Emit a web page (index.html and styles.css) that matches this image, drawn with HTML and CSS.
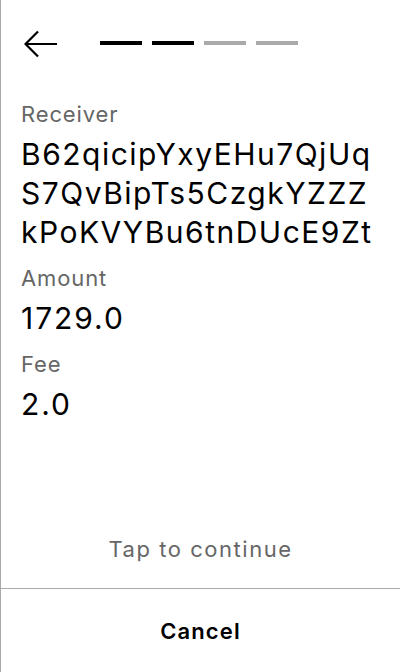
FILE: index.html
```html
<!DOCTYPE html>
<html>
<head>
<meta charset="utf-8">
<link rel="stylesheet" href="styles.css">
</head>
<body>
<div class="screen">
  <header class="header">
    <svg class="back" width="34" height="28" viewBox="0 0 34 28">
      <path d="M33 14H2M14 1.5L1.5 14L14 26.5" fill="none" stroke="#000" stroke-width="2.2"/>
    </svg>
    <div class="steps">
      <span class="step on"></span>
      <span class="step on"></span>
      <span class="step"></span>
      <span class="step"></span>
    </div>
  </header>
  <main class="content">
    <div class="label">Receiver</div>
    <div class="value address">B62qicipYxyEHu7QjUqS7QvBipTs5CzgkYZZZkPoKVYBu6tnDUcE9Zt</div>
    <div class="label">Amount</div>
    <div class="value">1729.0</div>
    <div class="label">Fee</div>
    <div class="value">2.0</div>
  </main>
  <div class="tap">Tap to continue</div>
  <button class="cancel">Cancel</button>
</div>
</body>
</html>
```
FILE: styles.css
```css
* { box-sizing: border-box; }
html, body { margin: 0; padding: 0; background: #fff; }
body { font-family: Inter, "Noto Sans", sans-serif; color: #000; }
.screen {
  width: 400px;
  height: 672px;
  border-left: 1px solid #aaa;
  display: flex;
  flex-direction: column;
}
.header {
  display: flex;
  align-items: center;
  padding: 29px 0 0 23px;
  height: 58px;
}
.back { display: block; }
.steps {
  display: flex;
  gap: 10px;
  margin-left: 42px;
  margin-top: -2px;
}
.step {
  width: 42px;
  height: 4px;
  background: #aaa;
}
.step.on { background: #000; }
.content {
  padding: 43px 16px 0 20px;
  flex: 1;
}
.label {
  font-size: 22px;
  line-height: 26px;
  color: #666;
  letter-spacing: 0.04em;
  margin-top: 13px;
}
.label:first-child { margin-top: 0; }
.value {
  font-size: 30px;
  line-height: 39px;
  letter-spacing: 0.065em;
  margin-top: 8px;
}
.value.address { word-break: break-all; letter-spacing: 0.05em; }
.tap {
  text-align: center;
  font-size: 22px;
  letter-spacing: 0.07em;
  color: #666;
  padding-bottom: 26px;
}
.cancel {
  display: block;
  width: 100%;
  height: 84px;
  border: 0;
  border-top: 1px solid #aaa;
  background: #fff;
  font-family: Inter, "Noto Sans", sans-serif;
  font-size: 22px;
  font-weight: 600;
  letter-spacing: 0.05em;
  color: #000;
  padding: 0;
}
```
